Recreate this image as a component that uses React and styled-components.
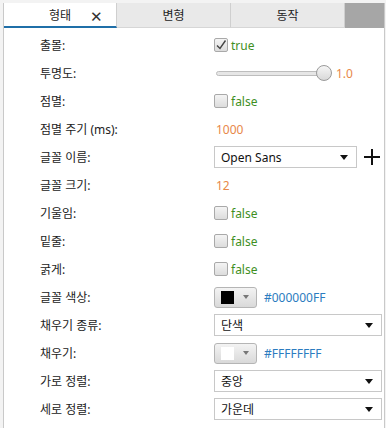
import React from 'react'
import styled, { createGlobalStyle } from 'styled-components'

const GlobalStyle = createGlobalStyle`
  html, body {
    margin: 0;
    padding: 0;
    background: #f3f3f3;
  }
  body {
    font-family: "Noto Sans", "Noto Sans CJK KR", sans-serif;
    font-size: 12px;
    color: #222;
  }
`

const Frame = styled.div`
  width: 386px;
  height: 428px;
  box-sizing: border-box;
  padding: 3px 1px 0 3px;
  overflow: hidden;
`

const Panel = styled.div`
  height: 100%;
  background: #fff;
  border-left: 1px solid #c9c9c9;
  border-right: 1px solid #c9c9c9;
  display: flex;
  flex-direction: column;
`

const TabBar = styled.div`
  display: flex;
  height: 25px;
  background: #a6a6a6;
`

const Tab = styled.div`
  position: relative;
  width: ${p => p.$w}px;
  box-sizing: border-box;
  display: flex;
  align-items: center;
  justify-content: center;
  background: ${p => (p.$active ? '#fff' : '#e9e9e9')};
  border-right: 1px solid #cfcfcf;
  border-bottom: ${p => (p.$active ? '2px solid #1f6fa8' : '1px solid #d6d6d6')};
  font-size: 12px;
  color: #222;
`

const Close = styled.span`
  position: absolute;
  right: 13px;
  top: 3px;
  font-size: 15px;
  color: #333;
`

const Rows = styled.div`
  display: flex;
  flex-direction: column;
  padding-top: 3px;
`

const Row = styled.div`
  display: grid;
  grid-template-columns: 210px 1fr;
  height: 28px;
  align-items: center;
`

const Label = styled.div`
  padding-left: 36px;
  color: #222;
`

const Value = styled.div`
  display: flex;
  align-items: center;
  gap: ${p => p.$gap || 3}px;
`

const Box = styled.span`
  width: 14px;
  height: 14px;
  box-sizing: border-box;
  border: 1px solid #a9a9a9;
  border-radius: 2px;
  background: linear-gradient(#f4f4f4, #dcdcdc);
  display: inline-flex;
  align-items: center;
  justify-content: center;
`

const Bool = styled.span`
  color: #3f8f1f;
`

const Num = styled.span`
  color: #e8884a;
  padding-left: 2px;
`

const Hex = styled.span`
  color: #2b7cc0;
`

const Track = styled.div`
  position: relative;
  width: 116px;
  height: 16px;
  margin-left: 2px;
`

const Rail = styled.div`
  position: absolute;
  left: 0;
  right: 6px;
  top: 6px;
  height: 3px;
  border: 1px solid #bdbdbd;
  border-radius: 3px;
  background: #e6e6e6;
`

const Thumb = styled.div`
  position: absolute;
  right: 0;
  top: 0;
  width: 14px;
  height: 14px;
  border-radius: 50%;
  border: 1px solid #9a9a9a;
  background: linear-gradient(#f6f6f6, #d8d8d8);
`

const Select = styled.div`
  width: ${p => p.$w}px;
  height: 22px;
  box-sizing: border-box;
  border: 1px solid #c8c8c8;
  background: #fff;
  display: flex;
  align-items: center;
  justify-content: space-between;
  padding: 0 8px 0 6px;
  color: #111;
`

const Caret = styled.span`
  width: 0;
  height: 0;
  border-left: 4px solid transparent;
  border-right: 4px solid transparent;
  border-top: 5px solid #111;
`

const PlusBtn = styled.span`
  display: inline-flex;
  margin-left: 1px;
`

const ColorBtn = styled.div`
  width: 43px;
  height: 21px;
  box-sizing: border-box;
  border: 1px solid #b5b5b5;
  border-radius: 3px;
  background: linear-gradient(#f3f3f3, #d9d9d9);
  display: flex;
  align-items: center;
  padding-left: 6px;
  gap: 9px;
`

const Swatch = styled.span`
  width: 13px;
  height: 13px;
  background: ${p => p.$c};
`

const SmallCaret = styled.span`
  border-left: 3px solid transparent;
  border-right: 3px solid transparent;
  border-top: 4px solid #777;
`

const Check = () => (
  <svg width="12" height="12" viewBox="0 0 12 12">
    <path d="M2 6.5 L5 9.5 L10.5 1.5" fill="none" stroke="#444" strokeWidth="1.4" />
  </svg>
)

const PlusIcon = () => (
  <svg width="18" height="18" viewBox="0 0 18 18">
    <path d="M9 1 V17 M1 9 H17" stroke="#111" strokeWidth="2" />
  </svg>
)

function CheckValue({ on }) {
  return (
    <Value>
      <Box>{on && <Check />}</Box>
      <Bool>{on ? 'true' : 'false'}</Bool>
    </Value>
  )
}

function ColorValue({ color, hex }) {
  return (
    <Value $gap={7}>
      <ColorBtn>
        <Swatch $c={color} />
        <SmallCaret />
      </ColorBtn>
      <Hex>{hex}</Hex>
    </Value>
  )
}

function Dropdown({ text, w = 168 }) {
  return (
    <Select $w={w}>
      <span>{text}</span>
      <Caret />
    </Select>
  )
}

export default function App() {
  return (
    <>
      <GlobalStyle />
      <Frame>
        <Panel>
          <TabBar>
            <Tab $w={113} $active>
              형태<Close>✕</Close>
            </Tab>
            <Tab $w={114}>변형</Tab>
            <Tab $w={114}>동작</Tab>
          </TabBar>
          <Rows>
            <Row><Label>출몰:</Label><CheckValue on /></Row>
            <Row>
              <Label>투명도:</Label>
              <Value $gap={2}>
                <Track><Rail /><Thumb /></Track>
                <Num>1.0</Num>
              </Value>
            </Row>
            <Row><Label>점멸:</Label><CheckValue /></Row>
            <Row><Label>점멸 주기 (ms):</Label><Value><Num>1000</Num></Value></Row>
            <Row>
              <Label>글꼴 이름:</Label>
              <Value $gap={5}>
                <Dropdown text="Open Sans" w={143} />
                <PlusBtn><PlusIcon /></PlusBtn>
              </Value>
            </Row>
            <Row><Label>글꼴 크기:</Label><Value><Num>12</Num></Value></Row>
            <Row><Label>기울임:</Label><CheckValue /></Row>
            <Row><Label>밑줄:</Label><CheckValue /></Row>
            <Row><Label>굵게:</Label><CheckValue /></Row>
            <Row><Label>글꼴 색상:</Label><ColorValue color="#000" hex="#000000FF" /></Row>
            <Row><Label>채우기 종류:</Label><Dropdown text="단색" /></Row>
            <Row><Label>채우기:</Label><ColorValue color="#fff" hex="#FFFFFFFF" /></Row>
            <Row><Label>가로 정렬:</Label><Dropdown text="중앙" /></Row>
            <Row><Label>세로 정렬:</Label><Dropdown text="가운데" /></Row>
          </Rows>
        </Panel>
      </Frame>
    </>
  )
}
